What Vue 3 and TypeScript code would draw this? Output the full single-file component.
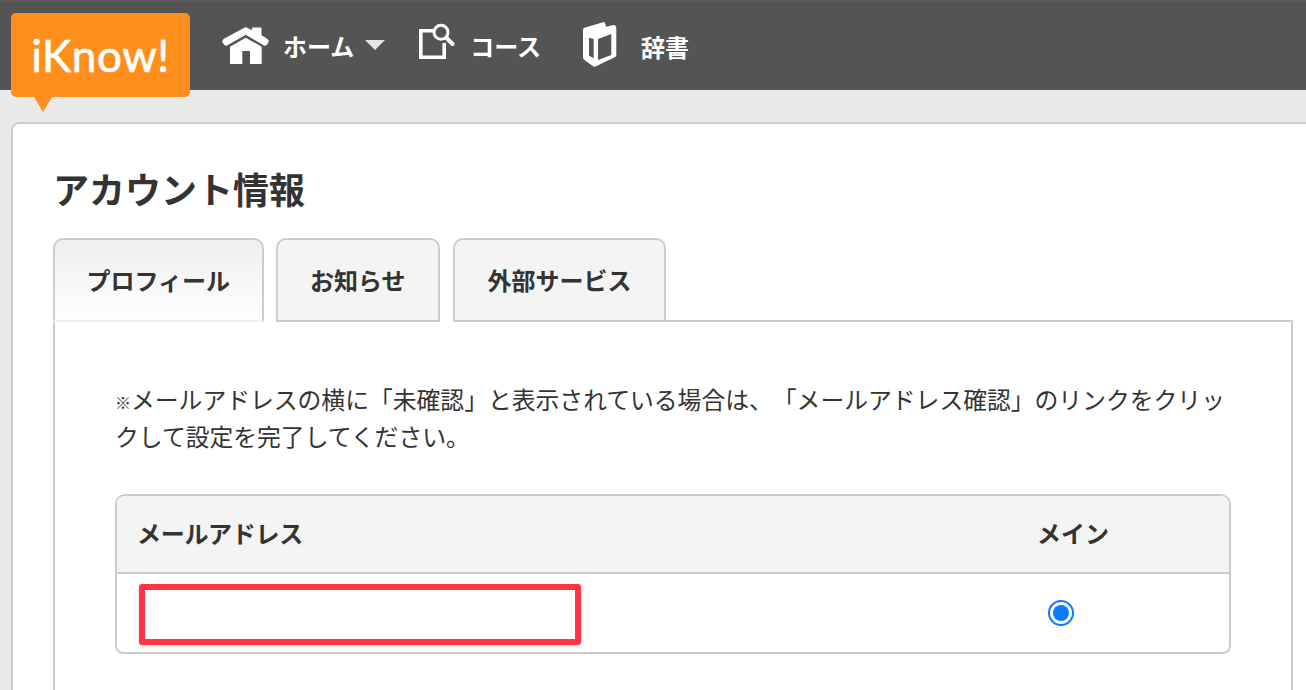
<script setup lang="ts">
const tabs: string[] = ['プロフィール', 'お知らせ', '外部サービス']
</script>

<template>
  <div class="page">
    <header class="topbar">
      <div class="logo">iKnow!</div>
      <nav class="nav">
        <a class="nav-item home">
          <svg class="icon" width="47" height="37" viewBox="0 0 47 37">
            <path fill="#fff" stroke="#fff" stroke-width="1" stroke-linejoin="round" d="M23.7 0.5 L30.3 4 L30.3 1 L39 1 L39 8.5 L45.5 12.5 Q47 14 45.5 16.5 Q44 19 42 18 L23.7 7.3 L5 18 Q3 19 1.5 16.5 Q0 14 1.5 12.5 Z"/>
            <path fill="#fff" d="M23.7 10.7 L39.7 19.7 L39.7 37 L28 37 L28 24 L20.3 24 L20.3 37 L8 37 L8 19.7 Z"/>
          </svg>
          <span class="nav-label">ホーム</span>
          <i class="caret"></i>
        </a>
        <a class="nav-item course">
          <svg class="icon" width="37" height="38" viewBox="0 0 37 38">
            <path fill="none" stroke="#fff" stroke-width="3.6" d="M16 7.8 H1.8 V34.2 H25.2 V20"/>
            <circle cx="22" cy="9.3" r="7" fill="none" stroke="#fff" stroke-width="3"/>
            <path stroke="#fff" stroke-width="4" stroke-linecap="round" d="M27.5 15 L33.5 21"/>
          </svg>
          <span class="nav-label">コース</span>
        </a>
        <a class="nav-item book">
          <svg class="icon" width="35" height="46" viewBox="0 0 35 46">
            <path fill="#fff" fill-rule="evenodd" d="M2.5 5.8 L21 0.2 Q22.7 -0.2 23.2 1.5 L24.3 4.7 L31.5 3 Q34.3 3 34.3 6.3 L34.3 33 Q34.3 34.7 32.7 35.3 L14 44.3 Q12.7 45 11 44.2 L2.5 38 Q1 37 1 35.5 L1 8 Q1 6.3 2.5 5.8 Z M7 15.7 L11.7 17 L11.7 36.3 L7 33.7 Z M16 17 L29.3 12 L29.3 33 L16 38 Z"/>
          </svg>
          <span class="nav-label">辞書</span>
        </a>
      </nav>
    </header>

    <main class="card">
      <h1 class="title">アカウント情報</h1>
      <div class="tabs">
        <div v-for="(t, i) in tabs" :key="t" class="tab" :class="{ active: i === 0 }">{{ t }}</div>
        <div class="tab-rest"></div>
      </div>
      <section class="panel">
        <p class="note"><span class="mark">※</span>メールアドレスの横に「未確認」と表示されている場合は、「メールアドレス確認」のリンクをクリックして設定を完了してください。</p>
        <div class="table">
          <div class="row head">
            <div class="c-mail">メールアドレス</div>
            <div class="c-main">メイン</div>
          </div>
          <div class="row body">
            <div class="c-mail"><div class="redbox"></div></div>
            <div class="c-main"><span class="radio"><span class="dot"></span></span></div>
          </div>
        </div>
      </section>
    </main>
  </div>
</template>

<style scoped>
.page {
  width: 1306px;
  height: 690px;
  overflow: hidden;
  background: #e9e9e9;
  color: #333;
  font-family: "Noto Sans CJK JP", "Liberation Sans", sans-serif;
  text-spacing-trim: space-all;
}
.topbar {
  position: relative;
  height: 88px;
  border-top: 2px solid #5b5b60;
  background: #545454;
  padding-left: 222px;
}
.logo {
  position: absolute;
  left: 11px;
  top: 11px;
  width: 179px;
  height: 84px;
  background: #ff8f1c;
  border-radius: 5px;
  color: #fff;
  font-family: "Lato", sans-serif;
  font-size: 44px;
  line-height: 85px;
  text-align: center;
  letter-spacing: 0.6px;
  -webkit-text-stroke: 0.7px #fff;
}
.logo::after {
  content: "";
  position: absolute;
  left: 23px;
  top: 84px;
  border-left: 9.5px solid transparent;
  border-right: 9.5px solid transparent;
  border-top: 15px solid #ff8f1c;
}
.nav {
  display: flex;
  align-items: flex-start;
}
.nav-item {
  display: flex;
  align-items: flex-start;
  color: #fff;
}
.icon {
  display: block;
  flex: none;
  overflow: visible;
}
.nav-label {
  font-size: 24px;
  font-weight: 700;
  line-height: 36px;
}
.home {
  padding-top: 25px;
}
.home .nav-label {
  margin: 1px 0 0 14px;
}
.caret {
  margin: 13px 0 0 11px;
  border-left: 10px solid transparent;
  border-right: 10px solid transparent;
  border-top: 10px solid #e6e6e6;
}
.course {
  margin-left: 34px;
  padding-top: 21px;
}
.course .nav-label {
  margin: 5px 0 0 14px;
}
.book {
  margin-left: 41px;
  padding-top: 20px;
}
.book .nav-label {
  margin: 7px 0 0 24px;
}
.card {
  margin: 32px 0 0 11px;
  width: 1320px;
  height: 601px;
  box-sizing: border-box;
  background: #fff;
  border: 2px solid #ccc;
  border-radius: 8px 0 0 0;
  padding: 37px 0 0 40px;
}
.title {
  margin: 0;
  font-size: 36px;
  font-weight: 700;
  line-height: 54px;
  color: #333;
}
.tabs {
  display: flex;
  margin-top: 23px;
  width: 1240px;
}
.tab {
  box-sizing: border-box;
  height: 84px;
  padding: 0 32.5px;
  border: 2px solid #ccc;
  border-radius: 10px 10px 0 0;
  background: #f4f4f4;
  font-size: 24px;
  font-weight: 700;
  line-height: 80px;
  white-space: nowrap;
}
.tab + .tab {
  margin-left: 12px;
}
.tab:nth-child(3) {
  margin-left: 13px;
}
.tab.active {
  padding: 0 31.5px;
  background: linear-gradient(#eeeeee, #ffffff);
  border-bottom-color: transparent;
}
.tab-rest {
  flex: 1;
  border-bottom: 2px solid #ccc;
}
.panel {
  box-sizing: border-box;
  width: 1240px;
  height: 400px;
  border-left: 2px solid #ccc;
  border-right: 2px solid #ccc;
  padding: 58px 60px 0 60px;
}
.note {
  margin: 0;
  font-size: 23.8px;
  line-height: 37px;
  color: #333;
}
.mark {
  display: inline-block;
  width: 16px;
  font-size: 16px;
  font-weight: 700;
  line-height: 1;
}
.table {
  box-sizing: border-box;
  margin-top: 40px;
  width: 1116px;
  border: 2px solid #ccc;
  border-radius: 10px 10px 8px 8px;
  overflow: hidden;
}
.row {
  display: flex;
}
.head {
  height: 72px;
  padding-bottom: 4px;
  align-items: center;
  background: #f4f4f4;
  border-bottom: 2px solid #ccc;
  font-size: 24px;
  font-weight: 700;
}
.head .c-mail {
  padding-left: 20px;
  letter-spacing: -0.3px;
}
.body {
  height: 78px;
}
.c-mail {
  flex: 1;
  padding-left: 22px;
}
.c-main {
  width: 192px;
}
.redbox {
  box-sizing: border-box;
  width: 442px;
  height: 61px;
  margin-top: 10px;
  border: 6px solid #ff3344;
  border-radius: 3px;
  box-shadow: 0 1px 4px rgba(0, 0, 0, 0.15);
}
.radio {
  box-sizing: border-box;
  display: flex;
  align-items: center;
  justify-content: center;
  width: 26px;
  height: 26px;
  margin: 26px 0 0 11px;
  border: 2px solid #0a7aff;
  border-radius: 50%;
}
.dot {
  width: 16px;
  height: 16px;
  background: #0a7aff;
  border-radius: 50%;
}
</style>

<style>
html, body { margin: 0; overflow: hidden; }
</style>
